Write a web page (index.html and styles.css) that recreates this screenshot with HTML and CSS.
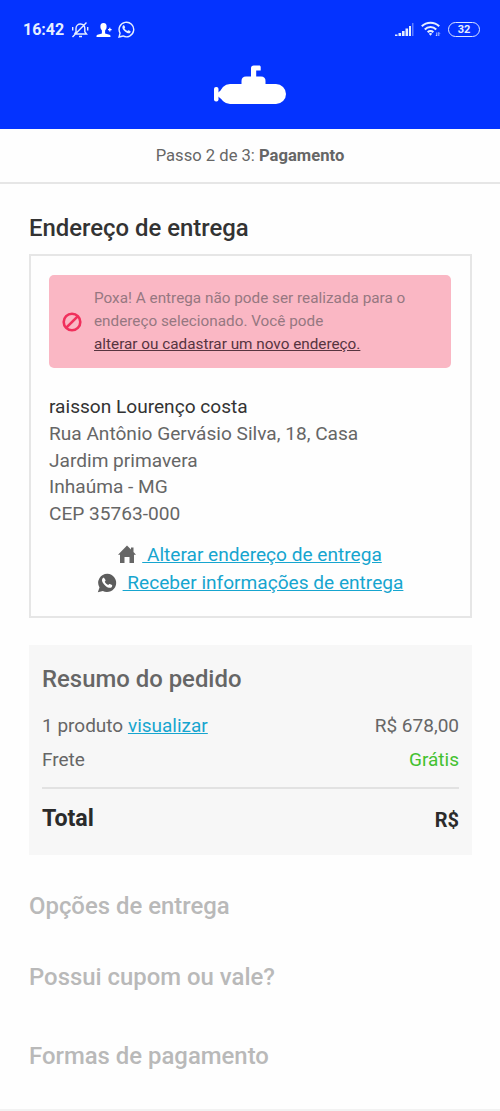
FILE: index.html
```html
<!DOCTYPE html>
<html lang="pt-BR">
<head>
<meta charset="utf-8">
<title>Pagamento</title>
<link rel="stylesheet" href="styles.css">
</head>
<body>
<header class="header">
  <div class="status">
    <span class="clock">16:42</span>
    <svg class="bell" width="18" height="18" viewBox="0 0 18 18" fill="none" stroke="currentColor" stroke-width="1.4"><path d="M3.500 13h12l-1.700-2.200V7.200A4.500 4.500 0 0 0 9.500 3 4.400 4.400 0 0 0 5 7.200v3.600L3.500 13M8 15.500h3M1.500 16 15.500 1.500M1.700 6v3.500M16.700 6v3.500"/></svg>
    <svg class="person" width="16" height="15" viewBox="0 0 16 15" fill="currentColor"><path d="M7.500 0c2.300 0 3.300 1.600 3.100 4-.1 1.700-.8 2.700-1.500 3.500v3l4.400 1.300c.9.300 1 1 1 2.200H.5c0-1.200.1-1.900 1-2.200l4.400-1.300v-3C5.200 6.700 4.500 5.700 4.400 4 4.200 1.600 5.200 0 7.500 0zM12 6h1.200V4.800h1.200V6h1.200v1.200h-1.200v1.200h-1.200V7.200H12z"/></svg>
    <svg class="wa" width="17" height="17" viewBox="0 0 24 24" fill="none" stroke="currentColor" stroke-width="2"><path d="m1.500 22.500 1.400-5.400A10.300 10.300 0 1 1 7 21.100z"/><path fill="currentColor" stroke="none" d="M8.800 6.500c-.4-.7-1.300-.5-1.800.1C4.700 9 7.500 13 10.700 15.500c2.700 2.100 5.700 2.700 6.800.6.700-1.500.4-1.600-.5-2.100l-1.900-.9c-.7-.3-1 .3-1.700 1.100-1.600-.4-3.700-2.400-4.300-3.900.8-.8 1.200-1.100.9-1.800z"/></svg>
    <svg class="signal" width="19" height="14" viewBox="0 0 19 14" fill="currentColor"><path d="M0 11.500h2.500V13H0zM3.500 10h2.600v3H3.500zM7 8h2.600v5H7zM10.500 5.500h2.600V13h-2.600z"/><path d="M14 3h2v10h-2z"/><path opacity=".4" d="M17 0h1.500v13H17z"/></svg>
    <svg class="wifi" width="20" height="16" viewBox="0 0 20 16" fill="none" stroke="currentColor" stroke-width="2.100"><path d="M.8 5.200a12.500 12.500 0 0 1 17.400 0M3.800 8.400a8 8 0 0 1 11.400 0M6.700 11.200a4 4 0 0 1 5.600 0"/><path fill="currentColor" stroke="none" d="m9.500 14.800-1.700-2a2.400 2.400 0 0 1 3.400 0z"/><path stroke-width="1" opacity=".8" d="M15.800 11.500V15M14.800 14l1 1M17.800 15v-3.500M18.800 12.500l-1-1"/></svg>
    <span class="battery">32</span>
  </div>
  <svg class="logo" width="74" height="42" viewBox="0 0 74 42" fill="#fff"><rect x="1" y="22" width="4.500" height="14.500" rx="2"/><path d="M4.500 28 12 22v15l-7.500-6z"/><rect x="7" y="19" width="66" height="20" rx="10"/><path d="M28.500 20v-4c0-3 1.500-4.500 4.500-4.500h15c3 0 4.500 1.500 4.500 4.500v4z"/><path d="M38 12V3.200c0-1.800 1-2.700 2.700-2.700H46c1.200 0 1.700.6 1.700 1.500V5.500h-4.500V12z"/></svg>
</header>
<div class="step"><p>Passo 2 de 3: <b>Pagamento</b></p></div>
<main class="main">
  <h2 class="title">Endereço de entrega</h2>
  <section class="card">
    <div class="alert">
      <svg class="ban" width="20" height="20" viewBox="0 0 20 20" fill="none" stroke="#f0305c" stroke-width="2.600"><circle cx="10" cy="10" r="8.300"/><path d="m4.300 15.700 11.400-11.400"/></svg>
      <p>Poxa! A entrega não pode ser realizada para o<br>endereço selecionado. Você pode<br><a class="alert-link">alterar ou cadastrar um novo endereço.</a></p>
    </div>
    <address class="address"><span class="name">raisson Lourenço costa</span><br>Rua Antônio Gervásio Silva, 18, Casa<br>Jardim primavera<br>Inhaúma - MG<br>CEP 35763-000</address>
    <div class="links">
      <div class="link-row"><svg width="18" height="19" viewBox="0 0 18 19" fill="#666"><path d="M9 .5 13 4.500V2.500h2.500V7L18 9.700h-2V18h-4.500v-6h-5v6H2V9.700H0z"/></svg><a class="link">&nbsp;Alterar endereço de entrega</a></div>
      <div class="link-row"><svg width="20" height="20" viewBox="0 0 24 24"><path fill="#5d5d5d" d="M12.500.8A11 11 0 0 0 3 17.400L1 23.200l6-1.600A11 11 0 1 0 12.500.8z"/><path fill="#fff" d="M8.800 6.200c-.4-.7-1.500-.5-2 .1C4.500 9 7.500 13.200 10.700 15.800c2.700 2.100 5.900 2.900 7.200.6.700-1.500.4-1.800-.5-2.300l-2-.9c-.8-.3-1.100.3-1.800 1.100-1.600-.4-3.700-2.400-4.300-3.900.8-.8 1.200-1.200.9-2z"/></svg><a class="link">&nbsp;Receber informações de entrega</a></div>
    </div>
  </section>
  <section class="summary">
    <h2 class="summary-title">Resumo do pedido</h2>
    <div class="row"><span>1 produto <a class="link">visualizar</a></span><span>R$ 678,00</span></div>
    <div class="row"><span>Frete</span><span class="free">Grátis</span></div>
    <div class="row total"><span>Total</span><span class="amount">R$</span></div>
  </section>
  <h2 class="pending delivery">Opções de entrega</h2>
  <h2 class="pending coupon">Possui cupom ou vale?</h2>
  <h2 class="pending payment">Formas de pagamento</h2>
</main>
<footer class="footer"></footer>
</body>
</html>
```
FILE: styles.css
```css
* { box-sizing: border-box; }
body { margin: 0; height: 1111px; display: flex; flex-direction: column; background: #fefefe; font-family: Roboto, sans-serif; color: #666; }
h2, p { margin: 0; font-weight: 500; }
p { font-weight: 400; }
.header { flex: none; height: 129px; background: #0433ff; color: #e6efff; display: flex; flex-direction: column; align-items: center; }
.status { width: 100%; height: 65px; padding: 20px 20px 0 23px; display: flex; align-items: flex-start; }
.status svg { flex: none; }
.clock { width: 42px; font-size: 16px; line-height: 20px; font-weight: 700; white-space: nowrap; }
.bell { margin: 1px 0 0 6px; }
.person { margin: 3px 0 0 7px; color: #fff; }
.wa { margin: 1px 0 0 6px; }
.signal { margin: 3px 0 0 auto; }
.wifi { margin: 1px 0 0 7px; }
.battery { width: 32px; height: 15px; margin: 2px 0 0 7px; border: 1px solid #dbe5ff; border-radius: 8px; font-size: 11px; line-height: 13px; font-weight: 700; text-align: center; }
.logo { flex: none; }
.step { flex: none; height: 55px; padding-top: 16px; border-bottom: 2px solid #e6e6e6; font-size: 16.600px; line-height: 22px; text-align: center; }
.step b { font-weight: 700; }
.main { flex: 1; padding: 28px 28px 0 29px; }
.title { font-size: 23.900px; line-height: 32px; color: #333; }
.card { height: 364px; margin-top: 10px; padding: 19px 19px 0 18px; border: 2px solid #e6e6e6; }
.alert { height: 93px; padding: 0 13px; border-radius: 5px; background: #fab7c4; display: flex; align-items: center; gap: 12px; font-size: 15.300px; line-height: 22.700px; color: #967781; white-space: nowrap; }
.ban { flex: none; }
.alert-link { color: #57343f; text-decoration: underline; }
.address { margin-top: 26px; font-style: normal; font-size: 19.100px; line-height: 26.800px; }
.name { color: #333; }
.links { margin-top: 13px; font-size: 19.100px; line-height: 28px; }
.link-row { display: flex; justify-content: center; align-items: center; gap: 6px; }
.link { color: #16a5cf; text-decoration: underline; }
.summary { height: 210px; margin-top: 27px; padding: 18px 13px 0; background: #f7f7f7; }
.summary-title { font-size: 23.900px; line-height: 32px; margin-bottom: 14px; }
.row { display: flex; justify-content: space-between; font-size: 19px; line-height: 33.500px; }
.free { color: #43c130; }
.total { margin-top: 11px; padding-top: 13px; border-top: 2px solid #e2e2e2; color: #2b2b2b; font-size: 23.200px; font-weight: 700; }
.amount { font-size: 20px; line-height: 37px; }
.pending { color: #b9b9b9; font-size: 23.900px; line-height: 32px; }
.delivery { margin-top: 35px; }
.coupon { margin-top: 39px; }
.payment { margin-top: 47px; }
.footer { flex: none; height: 2px; background: #f2f2f2; }
```
